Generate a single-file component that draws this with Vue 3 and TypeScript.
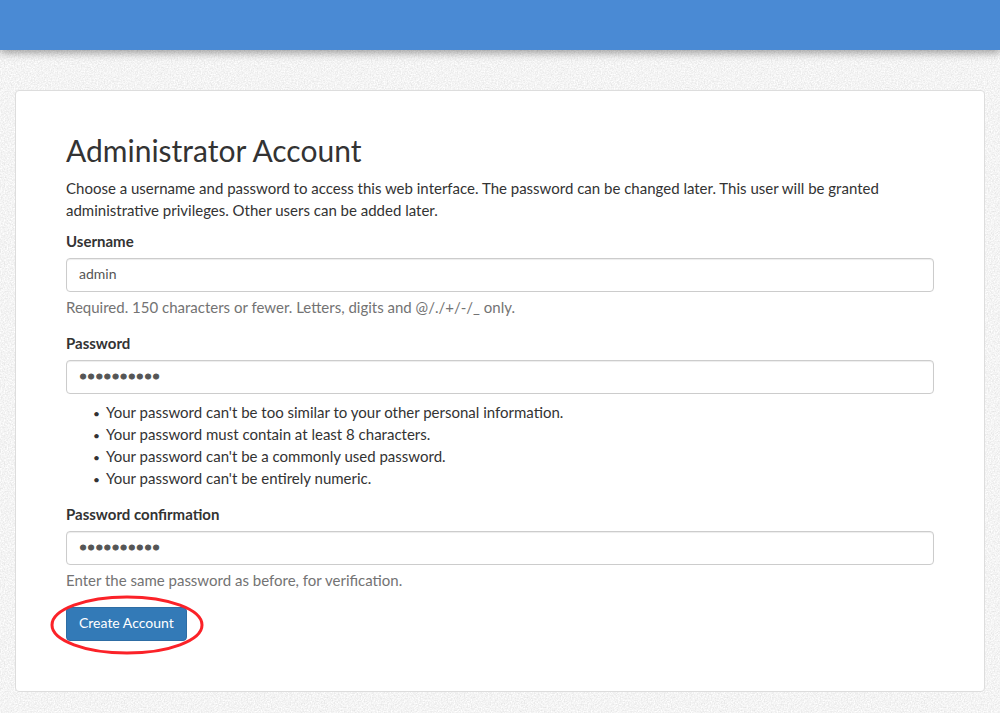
<script setup lang="ts">
import { ref } from 'vue'

const username = ref('admin')
const password = ref('freedombox')
const confirmation = ref('freedombox')

const passwordRules: string[] = [
  "Your password can't be too similar to your other personal information.",
  'Your password must contain at least 8 characters.',
  "Your password can't be a commonly used password.",
  "Your password can't be entirely numeric.",
]
</script>

<template>
  <div class="page">
    <header class="navbar"></header>
    <main class="card">
      <h2>Administrator Account</h2>
      <p class="intro">
        Choose a username and password to access this web interface. The password can be changed
        later. This user will be granted administrative privileges. Other users can be added later.
      </p>
      <form @submit.prevent>
        <div class="group">
          <label for="username">Username</label>
          <input id="username" v-model="username" type="text" aria-describedby="username-help" />
          <div id="username-help" class="help">
            Required. 150 characters or fewer. Letters, digits and @/./+/-/_ only.
          </div>
        </div>
        <div class="group">
          <label for="password">Password</label>
          <input id="password" v-model="password" type="password" aria-describedby="password-rules" />
          <ul id="password-rules">
            <li v-for="rule in passwordRules" :key="rule">{{ rule }}</li>
          </ul>
        </div>
        <div class="group">
          <label for="confirmation">Password confirmation</label>
          <input
            id="confirmation"
            v-model="confirmation"
            type="password"
            aria-describedby="confirmation-help"
          />
          <div id="confirmation-help" class="help">
            Enter the same password as before, for verification.
          </div>
        </div>
        <div class="action">
          <button type="submit">Create Account</button>
          <svg class="ring" viewBox="0 0 154 60" aria-hidden="true">
            <ellipse cx="77" cy="30" rx="75" ry="28" />
          </svg>
        </div>
      </form>
    </main>
  </div>
</template>

<style>
body {
  background-color: #f4f4f4;
  background-image: url("data:image/svg+xml,%3Csvg xmlns='http://www.w3.org/2000/svg' width='200' height='200'%3E%3Cfilter id='n' x='0' y='0' width='1' height='1' color-interpolation-filters='sRGB'%3E%3CfeTurbulence type='fractalNoise' baseFrequency='0.7' numOctaves='3' stitchTiles='stitch'/%3E%3CfeColorMatrix values='0.16 0 0 0 0.875 0.16 0 0 0 0.875 0.16 0 0 0 0.875 0 0 0 0 1'/%3E%3C/filter%3E%3Crect width='200' height='200' filter='url(%23n)'/%3E%3C/svg%3E");
}
</style>

<style scoped>
.page {
  padding-bottom: 21px;
  color: #333;
  font-family: Lato, 'Open Sans', sans-serif;
  font-size: 15px;
  line-height: 22px;
}

.navbar {
  height: 50px;
  background: #4a8ad4;
  box-shadow: 0 3px 8px rgba(0, 0, 0, 0.35);
}

.card {
  margin: 40px 15px 0;
  padding: 43px 50px 50px;
  border: 1px solid #ddd;
  border-radius: 4px;
  background: #fff;
}

h2 {
  margin: 0 0 10px;
  font-size: 30px;
  font-weight: 400;
  line-height: 33px;
}

.intro {
  margin: 0 0 9px;
}

.group {
  margin-bottom: 14px;
}

label {
  display: block;
  margin-bottom: 6px;
  font-weight: 700;
}

input {
  display: block;
  box-sizing: border-box;
  width: 100%;
  height: 34px;
  padding: 4px 12px 8px;
  border: 1px solid #ccc;
  border-radius: 4px;
  background: #fff;
  box-shadow: inset 0 1px 1px rgba(0, 0, 0, 0.075);
  color: #555;
  font-family: inherit;
  font-size: 14px;
  line-height: 20px;
}

input[type='password'] {
  -webkit-text-stroke: 1px #555;
}

.help {
  margin-top: 4px;
  color: #737373;
}

ul {
  margin: 7px 0 0;
  padding-left: 40px;
  list-style-type: '•  ';
}

li::marker {
  font-size: 12px;
}

.action {
  position: relative;
  width: fit-content;
  margin-top: 16px;
}

button {
  display: block;
  height: 34px;
  padding: 5px 12px 7px;
  border: 1px solid #2e6da4;
  border-radius: 4px;
  background: #337ab7;
  color: #fff;
  font-family: inherit;
  font-size: 14px;
  line-height: 20px;
  cursor: pointer;
}

.ring {
  position: absolute;
  top: -12px;
  left: -16px;
  width: 154px;
  height: 60px;
  pointer-events: none;
}

.ring ellipse {
  fill: none;
  stroke: #fb2228;
  stroke-width: 3;
}
</style>
